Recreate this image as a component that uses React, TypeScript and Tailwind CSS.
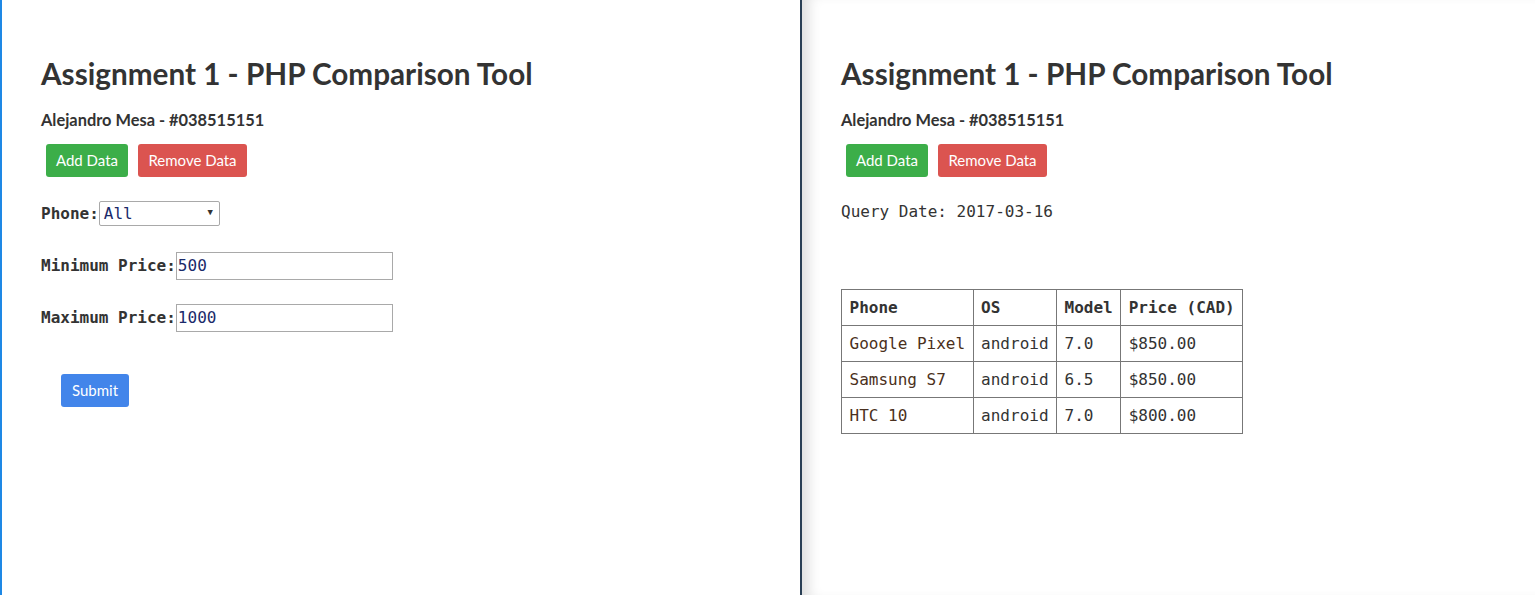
const rows = [
  { phone: 'Google Pixel', os: 'android', model: '7.0', price: '$850.00' },
  { phone: 'Samsung S7', os: 'android', model: '6.5', price: '$850.00' },
  { phone: 'HTC 10', os: 'android', model: '7.0', price: '$800.00' },
]

function Header() {
  return (
    <div>
      <h1 className="font-['Lato',sans-serif] text-[29.7px] font-bold text-[#333] leading-none mt-[59px]">
        Assignment 1 - PHP Comparison Tool
      </h1>
      <h3 className="font-['Lato',sans-serif] text-[16.4px] font-bold text-[#333] mt-[23px] leading-none">
        Alejandro Mesa - #038515151
      </h3>
      <div className="flex gap-[10px] ml-[5px] mt-[16px]">
        <button className="h-[33px] w-[82px] bg-[#3cae49] text-white text-[15px] rounded-[3px] font-['Lato',sans-serif]">
          Add Data
        </button>
        <button className="h-[33px] w-[109px] bg-[#db5450] text-white text-[15px] rounded-[3px] font-['Lato',sans-serif]">
          Remove Data
        </button>
      </div>
    </div>
  )
}

export default function App() {
  return (
    <div className="flex h-screen bg-white font-['DejaVu_Sans_Mono',monospace] text-[16px] text-[#333]">
      {/* left: form */}
      <div className="w-[802px] shrink-0 border-l-2 border-l-[#1e88e5] border-r-2 border-r-[#2a3f55] pl-[39px]">
        <Header />
        <div className="mt-[24px] flex items-center">
          <span className="font-bold">Phone:</span>
          <div className="relative w-[121px] h-[25px] border border-[#a9a9a9] rounded-[2px] flex items-center pl-[4px] text-[#1a2a6a]">
            All
            <span className="absolute right-[6px] top-[4px] text-[9px] text-[#333]">▼</span>
          </div>
        </div>
        <div className="mt-[26px] flex items-center">
          <span className="font-bold">Minimum Price:</span>
          <div className="w-[217px] h-[28px] border border-[#a9a9a9] flex items-center pl-[1px] text-[#1a2a6a]">500</div>
        </div>
        <div className="mt-[24px] flex items-center">
          <span className="font-bold">Maximum Price:</span>
          <div className="w-[217px] h-[28px] border border-[#a9a9a9] flex items-center pl-[1px] text-[#1a2a6a]">1000</div>
        </div>
        <button className="mt-[42px] ml-[20px] h-[33px] w-[68px] bg-[#4285ea] text-white text-[15px] rounded-[3px] font-['Lato',sans-serif]">
          Submit
        </button>
      </div>

      {/* right: results */}
      <div className="flex-1 pl-[39px] shadow-[inset_14px_0_14px_-8px_rgba(0,0,0,0.14)]">
        <Header />
        <p className="mt-[27px] leading-none">Query Date: 2017-03-16</p>
        <table className="mt-[69px] border-collapse border border-[#333]">
          <thead>
            <tr className="h-[36px]">
              <th className="border border-[#777] px-[7.5px] text-left font-bold">Phone</th>
              <th className="border border-[#777] px-[7.5px] text-left font-bold">OS</th>
              <th className="border border-[#777] px-[7.5px] text-left font-bold">Model</th>
              <th className="border border-[#777] px-[7.5px] text-left font-bold">Price (CAD)</th>
            </tr>
          </thead>
          <tbody>
            {rows.map((r) => (
              <tr key={r.phone} className="h-[36px]">
                <td className="border border-[#777] px-[7.5px] text-[#4a3020]">{r.phone}</td>
                <td className="border border-[#777] px-[7.5px]">{r.os}</td>
                <td className="border border-[#777] px-[7.5px]">{r.model}</td>
                <td className="border border-[#777] px-[7.5px]">{r.price}</td>
              </tr>
            ))}
          </tbody>
        </table>
      </div>
    </div>
  )
}
